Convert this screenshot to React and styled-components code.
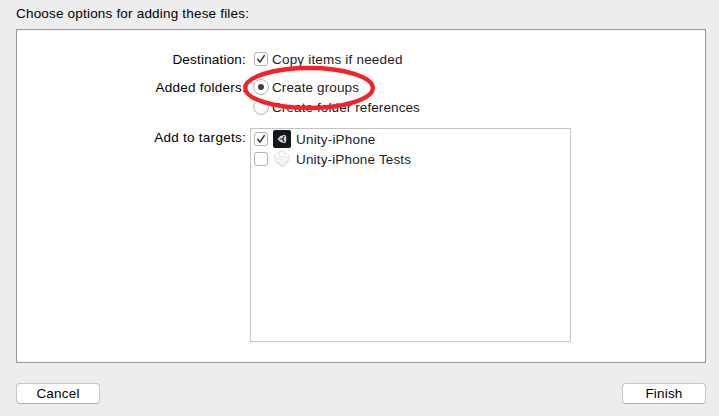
import React from "react";
import styled, { createGlobalStyle } from "styled-components";

const GlobalStyle = createGlobalStyle`
  * { box-sizing: border-box; }
  body {
    margin: 0;
    background: #ededed;
    color: #000;
    font: 13.5px/20px "Liberation Sans", Arial, sans-serif;
  }
`;

const Sheet = styled.main`
  width: 719px;
  height: 416px;
  padding: 4px 13px 12px 16px;
  display: flex;
  flex-direction: column;
  overflow: hidden;
  background: #ededed;
`;

const Text = styled.span`
  white-space: nowrap;
  letter-spacing: ${(p) => p.$track || "0.19px"};
`;

const Title = styled(Text).attrs({ as: "h1" })`
  margin: 0 0 5px;
  font-size: 13.5px;
  font-weight: 400;
  line-height: 20px;
`;

const Panel = styled.section`
  height: 334px;
  padding: 19px 0 0;
  display: flex;
  flex-direction: column;
  border: 1px solid #979797;
  background: #fff;
`;

const Field = styled.div`
  display: grid;
  grid-template-columns: 229px 321px;
  column-gap: 4px;
  margin-bottom: ${(p) => p.$gap || "0"};
`;

const FieldLabel = styled(Text)`
  justify-self: end;
  padding-top: ${(p) => p.$drop || "1px"};
  margin-bottom: -1px;
`;

const Choices = styled.div`
  position: relative;
  padding-left: 3px;
  color: #1c1c1c;
`;

const Option = styled.label`
  height: 20px;
  display: flex;
  align-items: center;
`;

const OptionText = styled(Text)`
  padding-top: 2px;
`;

const ControlSlot = styled.span`
  width: 16px;
  margin-right: 3px;
  display: flex;
  justify-content: center;
`;

const CheckBox = styled.span`
  width: 14px;
  height: 14px;
  display: flex;
  border: 1px solid #b4b4b4;
  border-radius: 3px;
  background: #fff;
`;

const RadioButton = styled.span`
  flex: none;
  width: 16px;
  height: 16px;
  display: grid;
  place-items: center;
  border: 1px solid #b4b4b4;
  border-radius: 50%;
  background: #fff;
`;

const RadioDot = styled.span`
  width: 6px;
  height: 6px;
  border-radius: 50%;
  background: #404040;
`;

const Targets = styled.div`
  height: 214px;
  padding: 0 2px;
  border: 1px solid #c5c5c5;
  background: #fff;
  color: #1c1c1c;
`;

const TargetRow = styled(Option)`
  svg.target { margin: 0 5px 0 1px; }
`;

const Highlight = styled.svg`
  position: absolute;
  left: -7px;
  top: -12px;
  pointer-events: none;
`;

const Footer = styled.footer`
  margin-top: 20px;
  display: flex;
  justify-content: space-between;
`;

const Button = styled.button`
  width: 84px;
  height: 21px;
  padding: 0;
  border: 1px solid #c6c6c6;
  border-bottom-color: #adadad;
  border-radius: 4px;
  background: #fff;
  color: #000;
  font: inherit;
  line-height: 18px;
`;

function Check({ checked }) {
  return (
    <ControlSlot>
      <CheckBox>
        {checked && (
          <svg width="12" height="12" viewBox="0 0 12 12" fill="none">
            <path d="M2.7 6.3 5 9 9.3 2.6" stroke="#3c3c3c" strokeWidth="1.6" strokeLinecap="round" strokeLinejoin="round" />
          </svg>
        )}
      </CheckBox>
    </ControlSlot>
  );
}

function Radio({ checked }) {
  return (
    <ControlSlot>
      <RadioButton>{checked && <RadioDot />}</RadioButton>
    </ControlSlot>
  );
}

function UnityIcon() {
  return (
    <svg className="target" width="18" height="18" viewBox="0 0 18 18">
      <rect width="18" height="18" rx="2" fill="#11171c" />
      <path d="M4.6 9 7.4 6 11.6 4.8 13 6 13.3 9 13 12 11.6 13.2 7.4 12Z" fill="#d5dadd" />
      <path d="M9.6 9H6.6M9.6 9 11.3 6.1M9.6 9 11.3 11.9" stroke="#11171c" strokeWidth="1.2" />
    </svg>
  );
}

function TestsIcon() {
  return (
    <svg className="target" width="18" height="18" viewBox="0 0 18 18" strokeLinejoin="round">
      <path d="M1.3 4.8 5.8 3V1.8L9 1.2 12.2 1.8V3L16.7 4.8 15.8 11.2 9 16.4 2.4 11.2Z" fill="#f5f5f5" stroke="#dedede" strokeWidth=".8" />
      <path d="M1.6 5 9 9.7 16.4 5 12.2 3.2H5.8Z" fill="#fff" />
      <path d="M6 2.8V5.8L9 7.3 12 5.8V2.8" fill="#fbfbfb" stroke="#d6d6d6" strokeWidth=".7" />
      <path d="M3.2 11.7 9 16.2 14.8 11.7" fill="none" stroke="#cecece" strokeWidth=".8" />
      <path d="M1.8 5.4 9 9.7 16.2 5.4" fill="none" stroke="#e6e6e6" strokeWidth=".6" />
    </svg>
  );
}

export default function App() {
  return (
    <>
      <GlobalStyle />
      <Sheet>
        <Title>Choose options for adding these files:</Title>
        <Panel>
          <Field $gap="8px">
            <FieldLabel>Destination:</FieldLabel>
            <Choices>
              <Option><Check checked /><OptionText>Copy items if needed</OptionText></Option>
            </Choices>
          </Field>
          <Field $gap="11px">
            <FieldLabel $track="0.25px">Added folders:</FieldLabel>
            <Choices>
              <Option><Radio checked /><OptionText $track="0.12px">Create groups</OptionText></Option>
              <Option><Radio /><OptionText $track="0.1px">Create folder references</OptionText></Option>
              <Highlight width="132" height="46" viewBox="0 0 132 46" fill="none">
                <ellipse cx="66" cy="23" rx="63.8" ry="20" stroke="#f5222b" strokeWidth="4.3" />
              </Highlight>
            </Choices>
          </Field>
          <Field>
            <FieldLabel $drop="0px" $track="0.27px">Add to targets:</FieldLabel>
            <Targets>
              <TargetRow><Check checked /><UnityIcon /><OptionText>Unity-iPhone</OptionText></TargetRow>
              <TargetRow><Check /><TestsIcon /><OptionText $track="0.16px">Unity-iPhone Tests</OptionText></TargetRow>
            </Targets>
          </Field>
        </Panel>
        <Footer>
          <Button type="button"><Text>Cancel</Text></Button>
          <Button type="button"><Text>Finish</Text></Button>
        </Footer>
      </Sheet>
    </>
  );
}
